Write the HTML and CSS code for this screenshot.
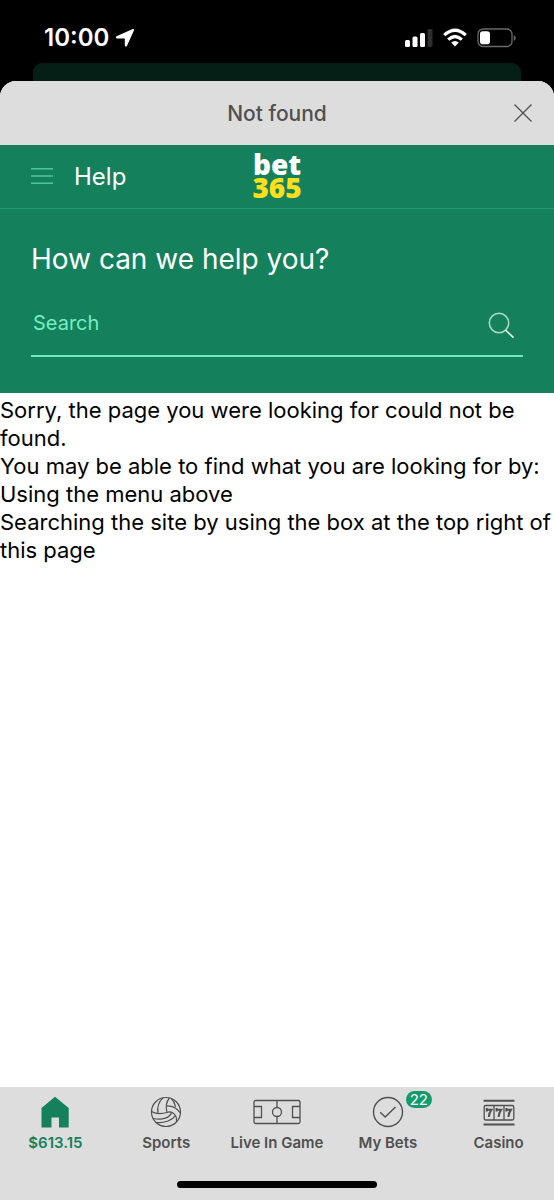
FILE: index.html
```html
<!DOCTYPE html>
<html lang="en">
<head>
  <meta charset="UTF-8" />
  <meta name="viewport" content="width=device-width, initial-scale=1" />
  <title>Not found</title>
  <link rel="stylesheet" href="styles.css">
</head>
<body>
  <div class="status-bar">
    <div class="clock">
      <span>10:00</span>
      <svg width="20" height="20" viewBox="0 0 20 20" aria-hidden="true">
        <path d="M17.800 1 1.500 8.200Q0 9.800 2 10.500H9.200Q9.800 10.500 9.800 11.200V17.600Q10.500 19.600 12 17.800L19 2.200Q19.400.600 17.800 1Z" fill="#fff"/>
      </svg>
    </div>
    <div class="indicators">
      <svg width="28" height="20" viewBox="0 0 28 20" aria-hidden="true">
        <g fill="#fff">
          <rect x="0" y="12" width="5" height="7" rx="1.500"/>
          <rect x="7.500" y="8.500" width="5" height="10.500" rx="1.500"/>
          <rect x="15" y="5" width="5" height="14" rx="1.500"/>
        </g>
        <rect x="22.500" y="1" width="5" height="18" rx="1.500" fill="#2e2e2e"/>
      </svg>
      <svg width="24" height="20" viewBox="0 0 24 20" aria-hidden="true">
        <g fill="none" stroke="#fff" stroke-width="3.200">
          <path d="M1.200 7.200Q12-2.800 22.800 7.200"/>
          <path d="M5.200 11.600Q12 5.400 18.800 11.600"/>
        </g>
        <path d="M8.200 14.500Q12 11.300 15.800 14.500L12 18.500Z" fill="#fff"/>
      </svg>
      <svg width="40" height="20" viewBox="0 0 40 20" aria-hidden="true">
        <rect x="1" y="1" width="34" height="17.500" rx="5" fill="none" stroke="#6b6b6b" stroke-width="1.300"/>
        <rect x="3" y="3.200" width="10" height="13" rx="2.800" fill="#fff"/>
        <path d="M36.800 7v6q1.900-1 1.900-3t-1.900-3Z" fill="#6b6b6b"/>
      </svg>
    </div>
  </div>
  <div class="sheet-behind"></div>

  <div class="sheet">
    <div class="title-bar">
      <h1>Not found</h1>
      <button class="close-btn" aria-label="Close">
        <svg width="20" height="20" viewBox="0 0 20 20">
          <path d="M1.500 1.500 18.500 18.500M18.500 1.500 1.500 18.500" fill="none" stroke="#505050" stroke-width="1.300"/>
        </svg>
      </button>
    </div>

    <header class="help-header">
      <div class="help-menu">
        <button class="menu-btn" aria-label="Menu">
          <svg width="22" height="18" viewBox="0 0 22 18">
            <path d="M0 .800H22M0 8H22M0 15.200H22" fill="none" stroke="#4cc79c" stroke-width="1.400"/>
          </svg>
        </button>
        <span class="help-title">Help</span>
      </div>
      <a class="logo" href="#"><span>bet</span><span class="logo-num">365</span></a>
    </header>

    <section class="search-panel">
      <h2>How can we help you?</h2>
      <form class="search-box">
        <input type="search" placeholder="Search" aria-label="Search">
        <button type="button" aria-label="Submit search">
          <svg width="28" height="28" viewBox="0 0 28 28">
            <circle cx="12" cy="13" r="9.700" fill="none" stroke="#a9dcc8" stroke-width="1.500"/>
            <path d="M18.500 20 26.500 27.700" fill="none" stroke="#e4f7ef" stroke-width="1.600"/>
          </svg>
        </button>
      </form>
    </section>

    <main class="message">
      <p>Sorry, the page you were looking for could not be found.</p>
      <p>You may be able to find what you are looking for by:</p>
      <p>Using the menu above</p>
      <p>Searching the site by using the box at the top right of this page</p>
    </main>
  </div>

  <nav class="tab-bar">
    <div class="tabs">
      <a class="tab active" href="#">
        <svg width="28" height="32" viewBox="0 0 28 32" aria-hidden="true">
          <path d="M14 .800 27.700 12V31.500H18V21.500H10.500V31.500H.500V12Z" fill="#15805c"/>
        </svg>
        <span>$613.15</span>
      </a>
      <a class="tab" href="#">
        <svg width="32" height="32" viewBox="0 0 32 32" aria-hidden="true">
          <g fill="none" stroke="#505050" stroke-width="1.200">
            <circle cx="16" cy="16" r="14.500"/>
            <path d="M19.500 2C16 6 15.500 11 17 16.500"/>
            <path d="M13 1.900C8.500 6 7 11 8 16.800"/>
            <path d="M1.500 15.500C6 18 12 18 17 16.500C20 15.200 23 16.200 25.500 19.500C26.500 21 26.800 22.500 26.500 25.500"/>
            <path d="M16.500 9.800C22.500 9.500 27.500 12.500 30.400 17"/>
            <path d="M21.500 2.800Q24.500 5.500 25.500 10.800"/>
            <path d="M21.500 16.500C20 21.500 13 24.500 3.200 22.500"/>
            <path d="M25.500 19.500C22 24.500 14 27.500 6 26.500"/>
          </g>
        </svg>
        <span>Sports</span>
      </a>
      <a class="tab" href="#">
        <svg width="48" height="32" viewBox="0 0 48 32" aria-hidden="true">
          <g fill="none" stroke="#505050" stroke-width="1.300">
            <rect x="1" y="4.500" width="46" height="23" rx="1.500"/>
            <path d="M24 4.500V11.500M24 20.500V27.500M1 10.500H8.500V21.500H1M47 10.500H39.500V21.500H47"/>
            <circle cx="24" cy="16" r="4.500"/>
          </g>
        </svg>
        <span>Live In Game</span>
      </a>
      <a class="tab" href="#">
        <div class="icon-wrap">
          <svg width="32" height="32" viewBox="0 0 32 32" aria-hidden="true">
            <g fill="none" stroke="#505050" stroke-width="1.400">
              <circle cx="16" cy="16" r="14.500"/>
              <path d="M8.200 16.200 13.200 21 23.500 11"/>
            </g>
          </svg>
          <span class="badge">22</span>
        </div>
        <span>My Bets</span>
      </a>
      <a class="tab" href="#">
        <svg width="32" height="32" viewBox="0 0 32 32" aria-hidden="true">
          <path d="M.500 4.800H31.500M.500 28.500H31.500" fill="none" stroke="#505050" stroke-width="1.900"/>
          <rect x="1.200" y="9.500" width="29.600" height="14.500" rx="1.500" fill="none" stroke="#505050" stroke-width="1.300"/>
          <path d="M11 9.500V24M21 9.500V24" stroke="#505050" stroke-width="1.300"/>
          <g fill="none" stroke="#505050" stroke-width="2">
            <path d="M3.800 12V15.500M3.800 13.800H8.300Q6.200 16.500 5.800 21"/>
            <path d="M13.600 12V15.500M13.600 13.800H18.100Q16 16.500 15.600 21"/>
            <path d="M23.400 12V15.500M23.400 13.800H27.900Q25.800 16.500 25.400 21"/>
          </g>
        </svg>
        <span>Casino</span>
      </a>
    </div>
    <div class="home-indicator"></div>
  </nav>
</body>
</html>
```
FILE: styles.css
```css
* {
  box-sizing: border-box;
}
body {
  margin: 0;
  min-height: 100vh;
  display: flex;
  flex-direction: column;
  background: #000;
  color: #000;
  font-family: Inter, "Liberation Sans", sans-serif;
}
h1, h2, p {
  margin: 0;
}
svg {
  display: block;
}
button {
  padding: 0;
  border: 0;
  background: none;
  cursor: pointer;
}
a {
  text-decoration: none;
}

/* status bar */
.status-bar {
  display: flex;
  justify-content: space-between;
  align-items: center;
  height: 63px;
  padding: 12px 37px 0 44px;
}
.clock {
  display: flex;
  align-items: center;
  gap: 6px;
  color: #fff;
  font-size: 24px;
  font-weight: 600;
}
.indicators {
  display: flex;
  align-items: center;
  gap: 10px;
}
.sheet-behind {
  height: 18px;
  margin: 0 33px;
  border-radius: 9px 9px 0 0;
  background: #051e16;
}

/* sheet */
.sheet {
  flex: 1;
  background: #fff;
  border-radius: 16px 16px 0 0;
  overflow: hidden;
}
.title-bar {
  display: grid;
  grid-template-columns: 1fr auto 1fr;
  align-items: center;
  height: 64px;
  padding: 0 21px;
  background: #ddd;
}
.title-bar h1 {
  grid-column: 2;
  color: #505050;
  font-size: 21px;
  font-weight: 500;
}
.close-btn {
  justify-self: end;
}

.help-header {
  display: grid;
  grid-template-columns: 1fr auto 1fr;
  align-items: center;
  height: 64px;
  padding: 0 31px;
  background: #15805c;
  border-bottom: 1px solid #259a70;
}
.help-menu {
  display: flex;
  align-items: center;
  gap: 21px;
}
.help-title {
  color: #fff;
  font-size: 24px;
}
.logo {
  display: flex;
  flex-direction: column;
  align-items: center;
  padding-bottom: 2px;
  color: #fff;
  font-family: "Noto Sans", "Open Sans", sans-serif;
  font-size: 28px;
  font-weight: 900;
  line-height: 23px;
}
.logo-num {
  color: #ffdf1b;
}

.search-panel {
  padding: 31px 31px 36px;
  background: #15805c;
}
.search-panel h2 {
  color: #fff;
  font-size: 28px;
  font-weight: 400;
  line-height: 38px;
}
.search-box {
  display: flex;
  align-items: center;
  height: 64px;
  margin-top: 15px;
  padding: 0 8px 0 2px;
  border-bottom: 2px solid #6ee8bd;
}
.search-box input {
  flex: 1;
  min-width: 0;
  padding: 0 0 3px;
  border: 0;
  outline: 0;
  background: none;
  color: #fff;
  font-family: inherit;
  font-size: 20px;
}
.search-box input::placeholder {
  color: #72efc2;
}

.message {
  padding-top: 3px;
  font-size: 22px;
  line-height: 28px;
}

/* bottom navigation */
.tab-bar {
  padding: 9px 0 12px;
  background: #ddd;
}
.tabs {
  display: grid;
  grid-template-columns: repeat(5, 1fr);
}
.tab {
  display: flex;
  flex-direction: column;
  align-items: center;
  gap: 6px;
  color: #505050;
  font-size: 15px;
  font-weight: 600;
  line-height: 18px;
}
.tab.active {
  color: #15805c;
}
.icon-wrap {
  position: relative;
}
.badge {
  position: absolute;
  top: -5px;
  left: 34px;
  width: 26px;
  border-radius: 9px;
  background: #149b6b;
  color: #fff;
  font-size: 15px;
  font-weight: 400;
  line-height: 17px;
  text-align: center;
}
.home-indicator {
  width: 36%;
  height: 7px;
  margin: 29px auto 0;
  border-radius: 4px;
  background: #000;
}
```
